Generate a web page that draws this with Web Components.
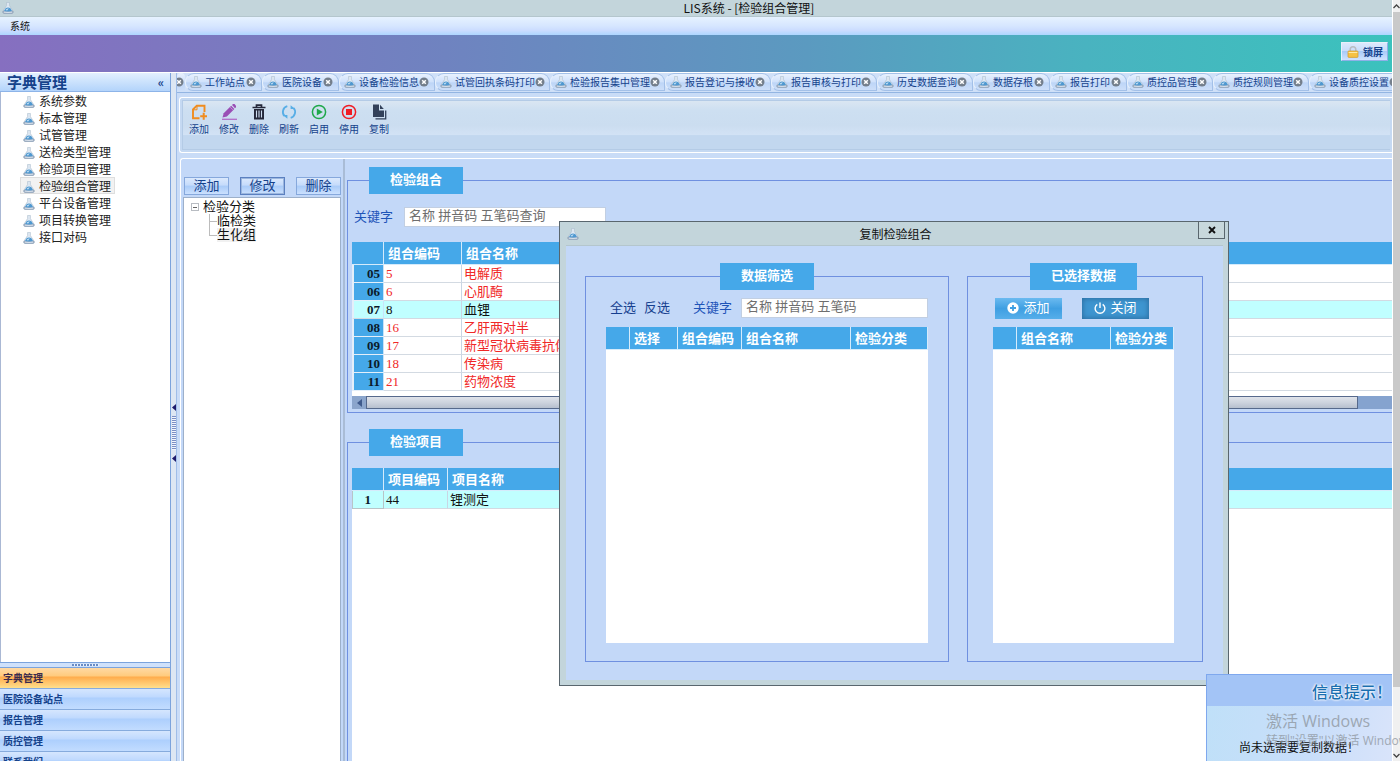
<!DOCTYPE html>
<html lang="zh-CN">
<head>
<meta charset="utf-8">
<title>LIS系统 - [检验组合管理]</title>
<style>
html, body { margin: 0; height: 100%; }
body { overflow: hidden; font-family: "Liberation Serif", "Noto Sans CJK SC", sans-serif; font-size: 13px; line-height: 18px; color: #111; }
</style>
</head>
<body>
<lis-app></lis-app>

<script>
const BASE = `
  *, *::before, *::after { box-sizing: border-box; }
  button, input { font: inherit; color: inherit; margin: 0; padding: 0; }
  button { cursor: pointer; white-space: nowrap; }
  a { color: inherit; text-decoration: none; }
  ul { list-style: none; margin: 0; padding: 0; }
`;
class Base extends HTMLElement {
  connectedCallback() {
    if (this.shadowRoot) return;
    const t = document.createElement('template');
    t.innerHTML = `<style>${BASE}${this.css()}</style>${this.html()}`;
    this.attachShadow({ mode: 'open' }).append(t.content.cloneNode(true));
  }
  css() { return ''; }
  html() { return ''; }
}

/* Small flask mark used in the title bars, the tabs and the side menu */
customElements.define('flask-icon', class extends Base {
  css() { return `:host{display:block;flex:none;width:12px;height:12px} svg{display:block;width:100%;height:100%}`; }
  html() { return `<svg viewBox="0 0 12 12" aria-hidden="true">
    <path d="M4.600 .4h2.800v3.200l3.800 5.800q.6 2-1.200 2H2q-1.800 0-1.200-2l3.800-5.800z" fill="#dfe9f3" stroke="#a9bacb" stroke-width=".6"/>
    <path d="M1 9q-.6 2.400 1 2.400h8q1.600 0 1-2.400z" fill="#a5b5c8" stroke="#7f92ab" stroke-width=".5"/>
    <path d="M3.400 6.400q2.600-1.600 5.200 0l1.400 2.500q-4 1.200-8 0z" fill="#4f98d0"/>
    <path d="M3.600 8q1.400-2.200 3.400-1.300q-1.300.4-1.800 1.700z" fill="#cfe7f8"/>
    <path d="M1.800 10.100q4.200.7 8.400 0" stroke="#e8eff6" stroke-width=".8" fill="none"/></svg>`; }
});

customElements.define('title-bar', class extends Base {
  css() { return `:host{display:flex;height:17px;background:#c3d5db;border-bottom:1px solid #b4c6cd;padding:0 8px 0 2px;align-items:center;font:12px/16px "Noto Sans CJK SC",sans-serif}
    span{flex:1;text-align:center;padding-left:100px}`; }
  html() { return `<flask-icon></flask-icon><span><slot></slot></span>`; }
});

customElements.define('menu-bar', class extends Base {
  css() { return `:host{display:flex;height:18px;padding-left:10px;background:linear-gradient(#e6f2ff,#d6e6ff 50%,#cbdcff 75%,#add6ff);font:10px/18px "Noto Sans CJK SC",sans-serif}
    button{border:0;background:none}`; }
  html() { return `<button>系统</button>`; }
});

customElements.define('top-banner', class extends Base {
  css() { return `:host{display:flex;height:38px;align-items:center;justify-content:flex-end;padding:0 4px 4px 0;border-bottom:1px solid #fff;
      background:linear-gradient(90deg,#866fc0,#6f83c0 32%,#5b9ac0 58%,#49b3c0 78%,#3bc2bd)}
    button{display:flex;align-items:center;gap:4px;height:19px;padding:0 4px 0 5px;border:1px solid #e7f0fb;border-right-color:#8eb0e8;border-bottom-color:#8eb0e8;
      background:linear-gradient(#dce9fd,#c9ddfb 45%,#a9cbf9 50%,#cfe3ff);font:bold 10px/16px "Noto Sans CJK SC",sans-serif;color:#15428b}
    svg{width:12px;height:12px}`; }
  html() { return `<button><svg viewBox="0 0 12 12" aria-hidden="true"><path d="M3.200 6V3.600a2.800 2.800 0 0 1 5.600 0V6" fill="none" stroke="#b9bcc2" stroke-width="1.500"/><rect x="1" y="5" width="10" height="6.400" rx=".8" fill="#f6c244" stroke="#d49a28" stroke-width=".7"/><path d="M1.600 6.500h8.800" stroke="#fde9a6"/></svg>锁屏</button>`; }
});

customElements.define('side-nav', class extends Base {
  css() { return `:host{display:flex;flex-direction:column;width:171px;flex:none;border-right:1px solid #7ba3dc;background:#fff;font-family:"Noto Sans CJK SC",sans-serif;min-height:0}
    header{display:flex;justify-content:space-between;align-items:center;height:19px;flex:none;padding:0 6px 0 7px;background:linear-gradient(#e3f0ff,#c6dffc 60%,#b3d4fb);border-bottom:1px solid #8db4e8;font:bold 15px/18px "Noto Sans CJK SC",sans-serif;color:#15428b}
    header button{border:0;background:none;font-size:12px;line-height:16px}
    .list{flex:1;min-height:0;padding:0 0 0 19px;font-size:12px;line-height:16px;border-left:1px solid #aab8d4;color:#222}
    .list a{display:flex;align-items:flex-start;gap:4px;width:max-content;height:17px;padding:0 3px 0 2px;border:1px solid transparent;line-height:15px}
    .list flask-icon{margin-top:3px}
    .list a.on{background:#f2f2f2;border-color:#dedede}
    .grip{height:6px;flex:none;border-top:1px solid #7ba3dc;border-bottom:1px solid #7ba3dc;background:#cfe1fb;display:flex;justify-content:center;align-items:center}
    .grip i{width:27px;height:2px;background:repeating-linear-gradient(90deg,#6a8cc4 0 2px,#e8f1fd 2px 3px)}
    .groups{flex:none;height:93px;overflow:hidden;font:bold 10px/20px "Noto Sans CJK SC",sans-serif;color:#15428b}
    .groups a{display:block;height:21px;padding-left:3px;border-bottom:1px solid #86abdd;background:linear-gradient(#d5e6fe,#bfd9fe 40%,#adcffd 45%,#c2dcff)}
    .groups a.on{color:#3a2a4c;background:linear-gradient(#ffd9a4,#ffcb7d 40%,#ffac4c 45%,#ffdf8c)}`; }
  html() {
    const items = ['系统参数','标本管理','试管管理','送检类型管理','检验项目管理','检验组合管理','平台设备管理','项目转换管理','接口对码'];
    const groups = ['字典管理','医院设备站点','报告管理','质控管理','联系我们'];
    return `<header>字典管理<button aria-label="收起">«</button></header>
      <nav class="list">${items.map((x, i) => `<a href="#" class="${i === 5 ? 'on' : ''}"><flask-icon></flask-icon>${x}</a>`).join('')}</nav>
      <div class="grip"><i></i></div>
      <nav class="groups">${groups.map((x, i) => `<a href="#" class="${i ? '' : 'on'}">${x}</a>`).join('')}</nav>`;
  }
});

customElements.define('side-splitter', class extends Base {
  css() { return `:host{display:flex;flex-direction:column;align-items:center;justify-content:center;gap:5px;width:5px;flex:none;background:#dde7f3;padding-top:32px}
    svg{width:4px;height:7px} i{width:4px;height:34px;background:repeating-linear-gradient(#7d8fc4 0 1px,#f2f6fc 1px 2px)}`; }
  html() { const a = `<svg viewBox="0 0 4 7" aria-hidden="true"><path d="M4 0v7L0 3.500z" fill="#1c1a6b"/></svg>`; return `${a}<i></i>${a}`; }
});

customElements.define('tab-strip', class extends Base {
  css() { return `:host{display:flex;height:20px;flex:none;overflow:hidden;background:#cfe0f8;border-bottom:1px solid #93b5e2;font:10px/16px "Noto Sans CJK SC",sans-serif;color:#15428b}
    .tab{display:flex;flex:none;align-items:center;height:18px;padding:0 5px 0 4px;border:1px solid #a3c0e8;border-left-color:#e8f1fd;border-radius:9px 9px 0 8px;background:linear-gradient(#e8f1fe,#cfe1fb 50%,#bdd5f7 55%,#cddff9)}
    .n4{width:77px}.n5{width:86px}.n6{width:96px}.n7{width:106px}.n8{width:115px}
    .first{width:8px;padding:0;justify-content:flex-start;border:0;overflow:hidden}
    .name{border:0;background:none;display:flex;align-items:center;gap:3px}
    .x{border:0;background:none;margin-left:auto;width:10px;height:10px;flex:none}
    .first .x{margin-left:-3px}
    svg{display:block;width:10px;height:10px}`; }
  html() {
    const x = `<button class="x" aria-label="关闭标签"><svg viewBox="0 0 10 10" aria-hidden="true"><circle cx="5" cy="5" r="4.500" fill="#747f8c"/><path d="M3.200 3.200l3.600 3.600M6.800 3.200L3.200 6.800" stroke="#fff" stroke-width="1.500"/></svg></button>`;
    const tabs = ['工作站点','医院设备','设备检验信息','试管回执条码打印','检验报告集中管理','报告登记与接收','报告审核与打印','历史数据查询','数据存根','报告打印','质控品管理','质控规则管理','设备质控设置'];
    return `<div class="tab first">${x}</div>` + tabs.map(t => `<div class="tab n${t.length}"><button class="name"><flask-icon></flask-icon>${t}</button>${x}</div>`).join('');
  }
});

const TOOLS = [
  ['添加', '<path d="M8.500 14.300H2V5.500L5.800 1.700h7.700V8" fill="none" stroke="#f08c1e" stroke-width="1.900"/><path d="M2.500 5.800H6V2" fill="none" stroke="#f08c1e" stroke-width="1"/><path d="M12.700 8.800v7M9.200 12.300h6.800" fill="none" stroke="#f08c1e" stroke-width="2"/>'],
  ['修改', '<path d="M1.500 13.500l1.200-4.300L10.200 1.700l3.200 3.200-7.500 7.500z" fill="#9a4fb5"/><path d="M11 1l1-1h1.500L15 1.800v1.500l-1 1z" fill="#9a4fb5"/><path d="M9.300 3.200l2.600 2.600" stroke="#d9b4e6" stroke-width=".7"/><path d="M1 15.300h15" stroke="#b06cc8" stroke-width="1.300"/>'],
  ['删除', '<path d="M1.500 3.500h13M5.500 3V1.200h5V3" stroke="#25283a" stroke-width="1.700" fill="none"/><path d="M3 5h10v10.500H3z" fill="#25283a"/><path d="M5.500 6.500v7M8 6.500v7M10.500 6.500v7" stroke="#cfdff2" stroke-width="1.100"/>'],
  ['刷新', '<path d="M6.300 2.200A6 6 0 0 0 3.600 12.200M9.700 13.800A6 6 0 0 0 12.400 3.800" fill="none" stroke="#58aee6" stroke-width="1.800"/><path d="M1.800 11h4.600v3.800zM14.200 5H9.600V1.200z" fill="#58aee6"/>'],
  ['启用', '<circle cx="8" cy="8" r="6.600" fill="none" stroke="#1fa84a" stroke-width="1.500"/><path d="M5.800 4.500v7l6-3.500z" fill="#1fa84a"/>'],
  ['停用', '<circle cx="8" cy="8" r="6.600" fill="none" stroke="#f01c24" stroke-width="1.500"/><rect x="5" y="5" width="6" height="6" fill="#f01c24"/>'],
  ['复制', '<path d="M2 .5h6v6h5V13H2z" fill="#33415a"/><path d="M9 .8V5h3.800z" fill="#33415a"/><path d="M4.500 14.900h10.200V6.500" fill="none" stroke="#33415a" stroke-width="1.300"/>']
];
customElements.define('tool-bar', class extends Base {
  css() { return `:host{display:block;height:56px;flex:none;margin:4px 0 5px 2px;padding:2px;border:1px solid #fff;border-right:0;border-radius:3px 0 0 3px;background:#c5d9f2}
    div{display:flex;height:100%;padding:3px 0 0 1px;border:1px solid #b4cbe6;border-right:0;background:linear-gradient(#dae6f2,#cddff1 20%,#cbddf0 50%,#d2e2f5 70%,#c2d7ef 72%)}
    button{display:flex;flex-direction:column;align-items:center;width:30px;border:0;background:none;font:10px/16px "Noto Sans CJK SC",sans-serif;color:#15428b;gap:1px}
    svg{width:16px;height:16px}`; }
  html() { return `<div>${TOOLS.map(([n, p]) => `<button><svg viewBox="0 0 16 16" aria-hidden="true">${p}</svg>${n}</button>`).join('')}</div>`; }
});

customElements.define('category-tree', class extends Base {
  css() { return `:host{display:flex;flex-direction:column;padding:18px 0 0 2px;min-height:0}
    .bar{display:flex;justify-content:space-between;padding:0 0 0 1px}
    .bar button{width:45px;height:18px;border:1px solid #86a8dc;background:linear-gradient(#dbe9fd,#c5dbfb 45%,#a9cbf8 50%,#cbe0fe);line-height:14px;color:#15428b}
    .bar button.focus{border-color:#5b80c0;box-shadow:inset 0 0 0 1px #9bb6de}
    .box{flex:1;margin-top:2px;background:#fff;border:1px solid #9db0ca;border-bottom:0;padding:2px 0 0 7px;line-height:14px}
    .root{display:flex;align-items:center;gap:4px}
    .root i{width:8px;height:8px;border:1px solid #b8bcc2;background:linear-gradient(#666,#666) center/4px 1px no-repeat}
    ul{margin-left:18px}
    li{display:flex;align-items:center;height:14px}
    li::before{content:"";width:8px;height:100%;border-left:1px solid #bcbcbc;background:linear-gradient(#bcbcbc,#bcbcbc) 0 7px/8px 1px no-repeat}
    li:last-child::before{height:8px;align-self:flex-start}
    li.on a{background:#f1f1f1}`; }
  html() { return `<div class="bar"><button>添加</button><button class="focus">修改</button><button>删除</button></div>
    <div class="box"><div class="root"><i></i><a href="#">检验分类</a></div><ul><li><a href="#">临检类</a></li><li class="on"><a href="#">生化组</a></li></ul></div>`; }
});

/* Framed group with a solid blue caption on its top edge */
customElements.define('group-box', class extends Base {
  css() { return `:host{display:block}
    fieldset{display:flex;flex-direction:column;height:100%;min-width:0;margin:0;padding:var(--pad,13px 0 3px 4px);border:1px solid #6f90e0;border-right-width:var(--right,1px);border-bottom-width:var(--bottom,1px)}
    legend{margin:var(--legend,0 auto);padding:0 21px;height:27px;background:#45a8e9;color:#fff;font-weight:bold;line-height:25px}`; }
  html() { return `<fieldset><legend>${this.getAttribute('caption')}</legend><slot></slot></fieldset>`; }
});

/* columns="标题|宽度;…"  rows="值,值;…"  selected="行号" */
customElements.define('data-grid', class extends Base {
  css() { return `:host{display:block;background:#fff;min-height:0;overflow:hidden}
    table{width:100%;table-layout:fixed;border-collapse:separate;border-spacing:0}
    th,td{padding:1px 0 0 2px;text-align:left;white-space:nowrap;overflow:hidden;line-height:16px;font-weight:normal}
    thead th{height:23px;padding:2px 0 0 4px;background:#45a8e9;color:#fff;font-weight:bold;line-height:20px;border-right:1px solid #d5ebfb;border-bottom:1px solid #d5ebfb}
    :host([open]) thead th:last-child{border-right:0}
    td{height:18px;border-bottom:1px solid #d3dae2;border-right:1px solid #c9d6e4;color:#f02828}
    td:last-child{border-right:0}
    tbody th{height:18px;padding:1px 3px 0 0;text-align:right;font-weight:bold;background:#45a8e9;color:#0b1a2a;border-left:2px solid #e4effa;border-right:1px solid #c9e3f8;border-bottom:1px solid #e4effa}
    .on td{background:#c0ffff;color:#111} .on th{background:#c0ffff;border-bottom-color:#d3dae2}
    :host([numbered="wide"]) tbody th{padding-right:12px;border-left:1px solid #b8c4c8;border-right-color:#b8c4c8;border-bottom-color:#b8c4c8}`; }
  html() {
    const cols = this.getAttribute('columns').split(';').map(c => c.split('|'));
    const rows = (this.getAttribute('rows') || '').split(';').filter(Boolean).map(r => r.split(','));
    const sel = Number(this.getAttribute('selected') || -1);
    return `<table><colgroup>${cols.map(c => `<col${c[1] ? ` style="width:${c[1]}px"` : ''}>`).join('')}</colgroup>
      <thead><tr>${cols.map(c => `<th scope="col">${c[0]}</th>`).join('')}</tr></thead>
      <tbody>${rows.map((r, i) => `<tr class="${i === sel ? 'on' : ''}">${r.map((v, j) => j ? `<td>${v}</td>` : `<th scope="row">${v}</th>`).join('')}</tr>`).join('')}</tbody></table>`;
  }
});

customElements.define('key-field', class extends Base {
  css() { return `:host{display:flex;align-items:center;gap:var(--gap,9px)}
    label{color:#1f55b8}
    input{width:var(--w,202px);flex:var(--grow,none);min-width:0;height:20px;padding:0 0 2px 4px;border:1px solid #c2cfe2;background:#fff;color:#333}
    input::placeholder{color:#6e6e6e;opacity:1}`; }
  html() { return `<label for="k">关键字</label><input id="k" type="text" placeholder="${this.getAttribute('hint')}">`; }
});

customElements.define('h-scroll', class extends Base {
  css() { return `:host{display:flex;height:13px;flex:none;background:#85a3cf}
    b{display:flex;align-items:center;justify-content:center;width:14px;background:#8ba5cc}
    svg{width:5px;height:8px}
    i{flex:1;margin-right:34px;border:1px solid #56698c;background:linear-gradient(#dfe3ea,#cdd3de 50%,#b6bfce)}`; }
  html() { return `<b><svg viewBox="0 0 5 8" aria-hidden="true"><path d="M5 0v8L0 4z" fill="#3f5a8c"/></svg></b><i></i>`; }
});

customElements.define('combo-page', class extends Base {
  css() { return `:host{display:grid;grid-template-columns:160px minmax(0,1fr);flex:1;min-height:0;margin-left:3px;border:1px solid #fff;border-right:0;border-bottom:0;border-radius:3px 0 0 0;background:#c3d8f8}
    .right{display:flex;flex-direction:column;gap:16px;min-height:0;margin-left:2px;padding:8px 0 0 2px;border-left:2px solid #a9bcd6}
    group-box{--legend:0 0 0 17px;--right:0}
    .lower{flex:1;min-height:0;--bottom:0;--pad:12px 0 0 4px}
    .lower data-grid{flex:1}
    .upper data-grid{margin-top:15px;padding-bottom:5px}
    key-field{padding-left:2px;--gap:11px}`; }
  html() { return `<category-tree></category-tree><div class="right">
      <group-box class="upper" caption="检验组合"><key-field hint="名称 拼音码 五笔码查询"></key-field>
        <data-grid open columns="|32;组合编码|78;组合名称|" selected="2" rows="05,5,电解质;06,6,心肌酶;07,8,血锂;08,16,乙肝两对半;09,17,新型冠状病毒抗体;10,18,传染病;11,21,药物浓度"></data-grid><h-scroll></h-scroll></group-box>
      <group-box class="lower" caption="检验项目"><data-grid open numbered="wide" columns="|32;项目编码|64;项目名称|" selected="0" rows="1,44,锂测定"></data-grid></group-box></div>`; }
});

customElements.define('copy-dialog', class extends Base {
  css() { return `:host{display:flex;flex-direction:column;position:absolute;left:559px;top:221px;width:670px;height:465px;padding:0 5px 5px 6px;border:1px solid #59666e;background:#c3d5db}
    header{display:flex;height:23px;flex:none;align-items:center;font:12px/22px "Noto Sans CJK SC",sans-serif}
    header flask-icon{margin-left:1px}
    h2{flex:1;margin:0;padding-left:14px;text-align:center;font:inherit}
    .close{align-self:flex-start;width:27px;height:17px;border:1px solid #59666e;border-top:0;background:#c8d8dc;display:flex;align-items:center;justify-content:center;margin-right:-2px}
    .close svg{width:8px;height:8px}
    main{display:flex;gap:18px;flex:1;min-height:0;padding:17px 20px 18px 19px;border-top:1px solid #b4c6cd;background:#c3d8f8}
    .pick{width:364px;--pad:8px 20px 18px 20px} .done{flex:1;--pad:8px 28px 18px 25px}
    .row{display:flex;align-items:center;height:20px;margin-bottom:9px}
    .row key-field{flex:1;--grow:1}
    .link{border:0;background:none;color:#163f8f;margin-right:8px} .link:first-child{margin-left:4px} .link+key-field{margin-left:15px}
    .act{display:flex;align-items:center;justify-content:center;gap:4px;width:67px;height:21px;border:0;color:#fff;margin:0 20px 0 2px;background:linear-gradient(#6bbaf0,#3f9fe2 50%,#56aeea)}
    .act+.act{margin:0;background:#3e95d0;box-shadow:inset 0 0 5px 1px #2d6fa3}
    .act svg{width:12px;height:12px}
    data-grid{flex:1}`; }
  html() { return `<header><flask-icon></flask-icon><h2>复制检验组合</h2><button class="close" aria-label="关闭窗口"><svg viewBox="0 0 8 8" aria-hidden="true"><path d="M1 1l6 6M7 1L1 7" stroke="#111" stroke-width="1.900"/></svg></button></header>
    <main><group-box class="pick" caption="数据筛选"><div class="row"><button class="link">全选</button><button class="link">反选</button><key-field hint="名称 拼音码 五笔码"></key-field></div>
      <data-grid columns="|24;选择|48;组合编码|64;组合名称|109;检验分类|"></data-grid></group-box>
    <group-box class="done" caption="已选择数据"><div class="row"><button class="act"><svg viewBox="0 0 12 12" aria-hidden="true"><circle cx="6" cy="6" r="5.700" fill="#fff"/><path d="M6 3v6M3 6h6" stroke="#3f9fe2" stroke-width="1.800"/></svg>添加</button><button class="act"><svg viewBox="0 0 12 12" aria-hidden="true"><path d="M3.300 2.300a4.900 4.900 0 1 0 5.400 0M6 .5v5.500" fill="none" stroke="#fff" stroke-width="1.400"/></svg>关闭</button></div>
      <data-grid columns="|24;组合名称|94;检验分类|"></data-grid></group-box></main>`; }
});

customElements.define('message-toast', class extends Base {
  css() { return `:host{display:block;position:absolute;right:8px;bottom:0;width:186px;height:87px;border:1px solid #7fa8ee;border-right:0;border-bottom:0;background:linear-gradient(100deg,#bfe0f8,#c9defa 60%,#d9e4fa);font-family:"Noto Sans CJK SC",sans-serif;overflow:hidden}
    h2{margin:0;height:31px;font-size:16px;line-height:32px;font-weight:500;text-align:right;color:#1a6fb0;background:#a3c4f6;text-shadow:0 0 2px #fff,0 0 2px #fff,0 0 3px #fff}
    p{margin:32px 0 0 32px;font-size:12px;line-height:18px;white-space:nowrap}`; }
  html() { return `<h2>信息提示！</h2><p>尚未选需要复制数据！</p>`; }
});

customElements.define('activation-mark', class extends Base {
  css() { return `:host{display:block;position:absolute;right:0;bottom:11px;width:134px;overflow:hidden;white-space:nowrap;color:#8c949c;opacity:.75;pointer-events:none;font-family:"Open Sans","Noto Sans CJK SC",sans-serif}
    div{font-size:16px;line-height:22px} p{margin:0;font-size:12px;line-height:18px}`; }
  html() { return `<div>激活 Windows</div><p>转到"设置"以激活 Windows。</p>`; }
});

customElements.define('page-scroll', class extends Base {
  css() { return `:host{display:flex;flex-direction:column;width:8px;flex:none;background:#f0f0f0;border-left:1px solid #fff}
    b{height:12px;display:flex;align-items:center;justify-content:center} b svg{width:7px;height:5px}
    i{flex:1;background:#c9c9c9;margin-bottom:62px}`; }
  html() { const a = d => `<b><svg viewBox="0 0 7 5" aria-hidden="true"><path d="${d}" fill="none" stroke="#444" stroke-width="1.300"/></svg></b>`; return a('M.5 4L3.500 1l3 3') + '<i></i>' + a('M.5 1l3 3 3-3'); }
});

customElements.define('lis-app', class extends Base {
  css() { return `:host{display:flex;height:100vh;position:relative;overflow:hidden}
    .app{flex:1;min-width:0;display:flex;flex-direction:column}
    .body{flex:1;min-height:0;display:flex}
    .main{flex:1;min-width:0;display:flex;flex-direction:column;border-left:1px solid #9fbde8;background:#c9dcf7}`; }
  html() { return `<div class="app"><title-bar>LIS系统 - [检验组合管理]</title-bar><menu-bar></menu-bar><top-banner></top-banner>
      <div class="body"><side-nav></side-nav><side-splitter></side-splitter><div class="main"><tab-strip></tab-strip><tool-bar></tool-bar><combo-page></combo-page></div></div></div>
    <page-scroll></page-scroll><copy-dialog></copy-dialog><message-toast></message-toast><activation-mark></activation-mark>`; }
});
</script>
</body>
</html>
